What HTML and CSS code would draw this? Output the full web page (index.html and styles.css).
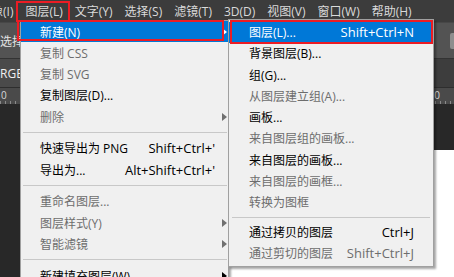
FILE: index.html
```html
<!DOCTYPE html>
<html lang="zh-CN">
<head>
<meta charset="utf-8">
<title>图层菜单</title>
<link rel="stylesheet" href="styles.css">
</head>
<body>
<div class="app">
  <div class="menubar">
    <span class="mb-item mb-cut">图像(I)</span>
    <span class="mb-item">图层(L)</span>
    <span class="mb-item">文字(Y)</span>
    <span class="mb-item">选择(S)</span>
    <span class="mb-item">滤镜(T)</span>
    <span class="mb-item">3D(D)</span>
    <span class="mb-item">视图(V)</span>
    <span class="mb-item">窗口(W)</span>
    <span class="mb-item">帮助(H)</span>
  </div>
  <div class="options">
    <span class="opt-text">选择</span>
    <span class="opt-box"></span>
  </div>
  <div class="tabs">
    <span class="tab">RGB</span>
  </div>
  <div class="ruler">
    <span class="ruler-num">0</span>
    <span class="ruler-num ruler-num-right">0</span>
  </div>
  <div class="workspace">
    <div class="doc"></div>
  </div>
</div>

<div class="menu menu-main">
  <div class="mi hl"><span class="lb">新建(N)</span><span class="sc"></span><span class="ar"></span></div>
  <div class="mi dis"><span class="lb">复制 CSS</span></div>
  <div class="mi dis"><span class="lb">复制 SVG</span></div>
  <div class="mi"><span class="lb">复制图层(D)...</span></div>
  <div class="mi dis"><span class="lb">删除</span><span class="sc"></span><span class="ar"></span></div>
  <div class="sep"></div>
  <div class="mi"><span class="lb">快速导出为 PNG</span><span class="sc">Shift+Ctrl+'</span></div>
  <div class="mi"><span class="lb">导出为...</span><span class="sc">Alt+Shift+Ctrl+'</span></div>
  <div class="sep"></div>
  <div class="mi dis"><span class="lb">重命名图层...</span></div>
  <div class="mi dis"><span class="lb">图层样式(Y)</span><span class="sc"></span><span class="ar"></span></div>
  <div class="mi dis"><span class="lb">智能滤镜</span><span class="sc"></span><span class="ar"></span></div>
  <div class="sep"></div>
  <div class="mi"><span class="lb">新建填充图层(W)</span><span class="sc"></span><span class="ar"></span></div>
</div>

<div class="menu menu-sub">
  <div class="mi hl"><span class="lb">图层(L)...</span><span class="sc">Shift+Ctrl+N</span></div>
  <div class="mi"><span class="lb">背景图层(B)...</span></div>
  <div class="mi"><span class="lb">组(G)...</span></div>
  <div class="mi dis"><span class="lb">从图层建立组(A)...</span></div>
  <div class="mi"><span class="lb">画板...</span></div>
  <div class="mi dis"><span class="lb">来自图层组的画板...</span></div>
  <div class="mi"><span class="lb">来自图层的画板...</span></div>
  <div class="mi dis"><span class="lb">来自图层的画框...</span></div>
  <div class="mi dis"><span class="lb">转换为图框</span></div>
  <div class="sep"></div>
  <div class="mi"><span class="lb">通过拷贝的图层</span><span class="sc">Ctrl+J</span></div>
  <div class="mi dis"><span class="lb">通过剪切的图层</span><span class="sc">Shift+Ctrl+J</span></div>
</div>

<div class="mark mark-bar"></div>
<div class="mark mark-new"></div>
<div class="mark mark-layer"></div>
</body>
</html>
```

FILE: styles.css
```css
* { box-sizing: border-box; margin: 0; padding: 0; }

html, body {
  width: 454px;
  height: 277px;
  overflow: hidden;
}

body {
  position: relative;
  background: #282828;
  font-family: "Open Sans", "Noto Sans CJK SC", sans-serif;
  font-size: 12px;
}

.app {
  display: flex;
  flex-direction: column;
  height: 277px;
}

/* ---------- menubar ---------- */
.menubar {
  height: 22px;
  flex: none;
  display: flex;
  align-items: center;
  gap: 12px;
  background: #3c3c3c;
  color: #dadada;
  white-space: nowrap;
  overflow: hidden;
}

.mb-cut { margin-left: -21px; }

/* ---------- options bar ---------- */
.options {
  height: 37px;
  flex: none;
  display: flex;
  align-items: center;
  justify-content: space-between;
  background: #535353;
  border-top: 1px solid #474747;
  border-bottom: 1px solid #333;
  color: #e4e4e4;
  white-space: nowrap;
}

.opt-box {
  width: 4px;
  height: 16px;
  background: #8e8e8e;
  border-radius: 2px 0 0 2px;
}

/* ---------- tabs ---------- */
.tabs {
  height: 28px;
  flex: none;
  display: flex;
  align-items: stretch;
  background: #3d3d3d;
}

.tab {
  display: flex;
  align-items: center;
  width: 24px;
  background: #4a4a4a;
  color: #f0f0f0;
  white-space: nowrap;
}

/* ---------- ruler ---------- */
.ruler {
  height: 17px;
  flex: none;
  display: flex;
  justify-content: space-between;
  align-items: flex-start;
  background:
    repeating-linear-gradient(90deg, #8a8a8a 0 1px, transparent 1px 5px) left bottom / 100% 3px no-repeat,
    #4a4a4a;
  border-top: 1px solid #2e2e2e;
  color: #d8d8d8;
  font-size: 10px;
  line-height: 14px;
}

.ruler-num { padding-left: 1px; }
.ruler-num-right { margin-right: 14px; }

/* ---------- workspace ---------- */
.workspace {
  flex: 1;
  display: flex;
  padding: 46px 0 0 110px;
  background: #282828;
}

.doc {
  flex: 1;
  background: #ffffff;
}

/* ---------- dropdown menus ---------- */
.menu {
  position: absolute;
  background: #f0f0f0;
  border: 1px solid #a0a0a0;
  box-shadow: 2px 2px 2px rgba(0, 0, 0, 0.35);
  color: #000;
  white-space: nowrap;
}

.menu-main {
  left: 20px;
  top: 20px;
  width: 209px;
  padding: 0 0 20px 0;
}

.menu-sub {
  left: 228px;
  top: 19px;
  width: 206px;
  padding: 1.5px 0 2px 0;
}

.mi {
  display: grid;
  align-items: center;
  height: 21.25px;
}

.menu-main .mi {
  grid-template-columns: 1fr auto 13px;
  padding-left: 19px;
}

.menu-sub .mi {
  grid-template-columns: 1fr auto;
  padding: 0 19px 0 20px;
}

.sc {
  font-size: 13px;
  text-align: right;
}

.dis { color: #6d6d6d; }

.hl {
  background: #0078d7;
  color: #ffffff;
}

.ar {
  justify-self: end;
  margin-right: 1px;
  width: 0;
  height: 0;
  border-left: 5px solid #000;
  border-top: 4.5px solid transparent;
  border-bottom: 4.5px solid transparent;
}

.dis .ar { border-left-color: #707070; }
.hl .ar { border-left-color: #ffffff; }

.menu-main .sep {
  height: 10.5px;
  margin: 0 1px 0 2px;
  background: linear-gradient(#c8c8c8, #c8c8c8) center / 100% 1px no-repeat;
}

.menu-sub .sep {
  height: 8.5px;
  margin: 0 3px;
  background: linear-gradient(#c8c8c8, #c8c8c8) center / 100% 1px no-repeat;
}

/* ---------- red annotation boxes ---------- */
.mark {
  position: absolute;
  border: 2px solid #ec1c24;
  pointer-events: none;
}

.mark-bar   { left: 16px;  top: 1px;  width: 54px;  height: 21px; }
.mark-new   { left: 17px;  top: 20px; width: 207px; height: 21px; }
.mark-layer { left: 230px; top: 20px; width: 203px; height: 24px; }
```
